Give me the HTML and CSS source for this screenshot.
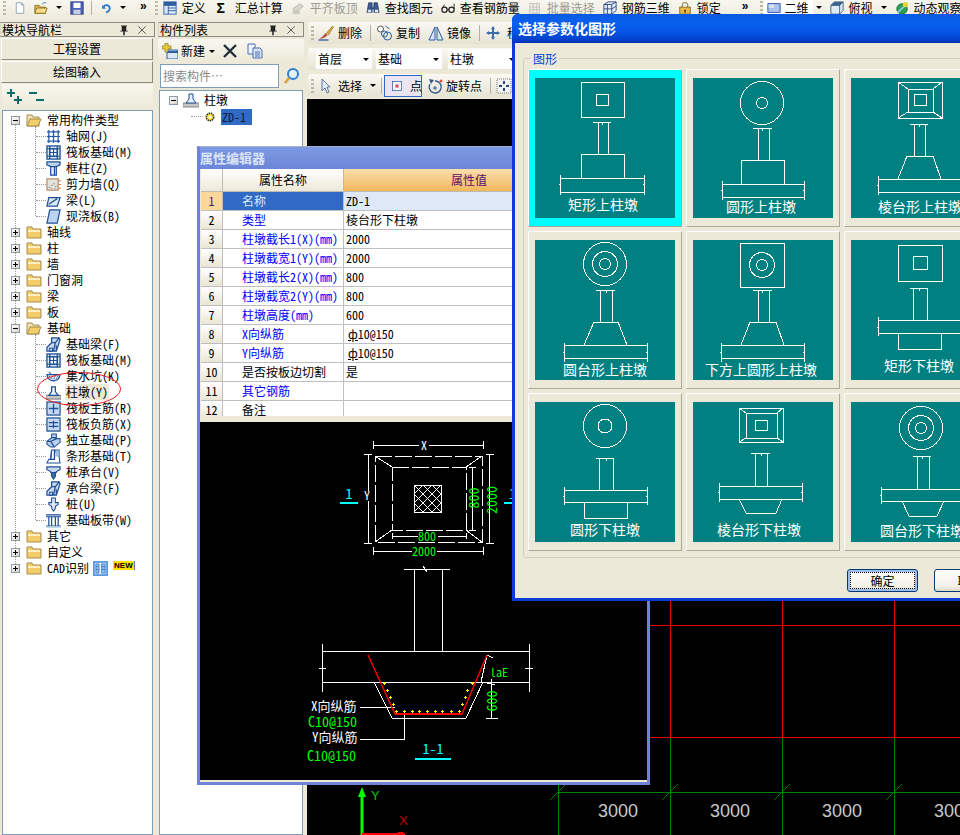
FILE: index.html
```html
<!DOCTYPE html>
<html lang="zh-CN">
<head>
<meta charset="utf-8">
<title>参数化图形</title>
<link rel="stylesheet" href="styles.css">
</head>
<body>
<svg class="sprite" xmlns="http://www.w3.org/2000/svg">
  <symbol id="doc" viewBox="0 0 16 16"><path d="M3 1H10L13 4V15H3Z" fill="#fff" stroke="#7b8da8"/><path d="M10 1V4H13" fill="#dfe6f0" stroke="#7b8da8"/></symbol>
  <symbol id="open" viewBox="0 0 16 16"><path d="M1 5H6L7 7H13V14H1Z" fill="#e7b84c" stroke="#8a6a20"/><path d="M3 8H15L13 14H1Z" fill="#f7dc8c" stroke="#8a6a20"/><path d="M9 4Q11 1 14 2" fill="none" stroke="#3b6bb0"/></symbol>
  <symbol id="save" viewBox="0 0 16 16"><rect x="1" y="1" width="14" height="14" fill="#4a62b8" stroke="#28357c"/><rect x="4" y="2" width="8" height="6" fill="#fff"/><rect x="4" y="10" width="8" height="5" fill="#c7cede"/></symbol>
  <symbol id="undo" viewBox="0 0 16 16"><path d="M3 4V9H8" fill="#2f75c8"/><path d="M4 8C6 3 12 3 13 8C13 11 11 13 8 14" fill="none" stroke="#2f75c8" stroke-width="2.4"/></symbol>
  <symbol id="def" viewBox="0 0 16 16"><rect x="1" y="1" width="14" height="14" fill="#dce8f6" stroke="#2d5f9e"/><path d="M1 5H15M6 5V15M6 8H15M6 11H15" stroke="#2d5f9e" fill="none"/><rect x="1" y="1" width="14" height="4" fill="#2d5f9e"/></symbol>
  <symbol id="grayi" viewBox="0 0 16 16"><path d="M2 9L10 3L14 6L6 13Z" fill="#d8d6cc" stroke="#b5b3a9"/><rect x="2" y="11" width="8" height="4" fill="#c8c6bc"/></symbol>
  <symbol id="binoc" viewBox="0 0 16 16"><path d="M3 2H7V7H9V2H13L15 13H9V9H7V13H1Z" fill="#3a5a92" stroke="#1b2d55" stroke-width=".7"/><rect x="2" y="10" width="4" height="3" fill="#dbe4f5"/><rect x="10" y="10" width="4" height="3" fill="#dbe4f5"/></symbol>
  <symbol id="glass" viewBox="0 0 16 16"><circle cx="4" cy="10" r="3" fill="none" stroke="#222" stroke-width="1.4"/><circle cx="12" cy="10" r="3" fill="none" stroke="#222" stroke-width="1.4"/><path d="M7 10H9M1 9L4 4M15 9V3" stroke="#222" fill="none"/></symbol>
  <symbol id="batch" viewBox="0 0 16 16"><rect x="2" y="3" width="11" height="11" fill="#eee" stroke="#c3c1b8"/><path d="M2 7H13M2 10H13M6 3V14M10 3V14" stroke="#c3c1b8"/></symbol>
  <symbol id="g3d" viewBox="0 0 16 16"><path d="M1 4L6 1H15V11L10 15H1Z" fill="#e8eef8" stroke="#23407c"/><path d="M1 4H10V15M10 4L15 1M1 9H10M5 4V15M10 9L15 6" fill="none" stroke="#23407c"/></symbol>
  <symbol id="lock" viewBox="0 0 16 16"><path d="M5 7V4C5 1 11 1 11 4V7" fill="none" stroke="#9a8f70" stroke-width="1.5"/><rect x="2" y="7" width="12" height="8" fill="#e8b84a" stroke="#8d6a1c"/><path d="M7 10H9V13H7Z" fill="#5b4310"/></symbol>
  <symbol id="rect2d" viewBox="0 0 16 16"><rect x="1" y="3" width="14" height="10" fill="#a9c2ee" stroke="#2d4ea8"/><rect x="2" y="4" width="6" height="4" fill="#d5e1f7"/></symbol>
  <symbol id="cube" viewBox="0 0 16 16"><path d="M1 5L5 1H15V11L11 15H1Z" fill="#dfeaf5" stroke="#38587e"/><path d="M1 5H11V15M11 5L15 1" fill="none" stroke="#38587e"/><path d="M1 5L5 1H15L11 5Z" fill="#36648c"/></symbol>
  <symbol id="globe" viewBox="0 0 16 16"><circle cx="8" cy="9" r="6" fill="#2f9d54" stroke="#1c6b37"/><path d="M3 13L14 3" stroke="#8cc8e8" stroke-width="2"/><circle cx="12" cy="4" r="3" fill="#e8d43a"/></symbol>
  <symbol id="brush" viewBox="0 0 16 16"><path d="M1 14Q5 11 7 8L9 10Q7 13 1 14Z" fill="#ba4f45"/><path d="M8 8L14 1L15 2L10 10Z" fill="#d7a73f" stroke="#7c6020" stroke-width=".5"/><path d="M0 15H10" stroke="#3b63a8" stroke-width="1.4"/></symbol>
  <symbol id="copyr" viewBox="0 0 16 16"><circle cx="4" cy="4" r="3" fill="#fff" stroke="#555"/><circle cx="11" cy="11" r="4" fill="none" stroke="#2d5f9e"/><circle cx="8" cy="9" r="3" fill="none" stroke="#2d5f9e"/><path d="M9 1L13 4" stroke="#2d5f9e"/></symbol>
  <symbol id="mirror" viewBox="0 0 16 16"><path d="M1 15L7 2V15ZM15 15L9 2V15Z" fill="#d9e6f6" stroke="#2d5f9e"/></symbol>
  <symbol id="move" viewBox="0 0 16 16"><path d="M8 1L10 4H9V7H12V6L15 8L12 10V9H9V12H10L8 15L6 12H7V9H4V10L1 8L4 6V7H7V4H6Z" fill="#3a6ea8"/></symbol>
  <symbol id="cursor" viewBox="0 0 16 16"><path d="M5 1V13L8 10L10 15L12 14L10 9H13Z" fill="#dfe8f6" stroke="#41618f" stroke-width=".8"/></symbol>
  <symbol id="dot" viewBox="0 0 16 16"><rect x="2" y="2" width="12" height="12" fill="#fff" stroke="#2d5f9e"/><path d="M3 3L13 13M13 3L3 13" stroke="#c8c8d8"/><rect x="6" y="6" width="4" height="4" fill="#e33b5a"/></symbol>
  <symbol id="rot" viewBox="0 0 16 16"><path d="M3 6A6 6 0 1 0 8 3" fill="none" stroke="#33598f" stroke-width="1.3"/><path d="M2 1L7 2L4 6Z" fill="#33598f"/><path d="M6 10H10M8 8V12" stroke="#33598f"/><circle cx="14" cy="3" r="1.5" fill="#d54"/></symbol>
  <symbol id="fit" viewBox="0 0 16 16"><rect x="1" y="1" width="14" height="14" fill="#f4f4f0" stroke="#777" stroke-dasharray="1 1"/><path d="M8 3V6M8 10V13M3 8H6M10 8H13" stroke="#234a86" stroke-width="2"/></symbol>
  <symbol id="addn" viewBox="0 0 16 16"><rect x="5" y="7" width="11" height="9" fill="#dce8f6" stroke="#2d5f9e"/><path d="M5 9H16" stroke="#2d5f9e" stroke-width="2"/><path d="M3 0H6V3H9V6H6V9H3V6H0V3H3Z" fill="#e8c93a" stroke="#7c6a16" stroke-width=".6"/></symbol>
  <symbol id="cross" viewBox="0 0 16 16"><path d="M2 2L14 14M14 2L2 14" stroke="#222d3d" stroke-width="2.4"/></symbol>
  <symbol id="copy" viewBox="0 0 16 16"><path d="M1 1H8V11H1Z" fill="#eef3fb" stroke="#4b6fb0"/><path d="M6 5H13L15 7V15H6Z" fill="#d9e5f7" stroke="#4b6fb0"/><path d="M8 9H13M8 11H13M8 13H13" stroke="#4b6fb0"/></symbol>
  <symbol id="find" viewBox="0 0 16 16"><circle cx="9" cy="6" r="5" fill="#e5f1fb" stroke="#2e7fd0" stroke-width="2"/><path d="M5 10L1 15" stroke="#e0a030" stroke-width="2.6"/></symbol>
  <symbol id="closed" viewBox="0 0 16 16"><path d="M1 3H6L7 5H15V14H1Z" fill="#f2cd6a" stroke="#a98d4a"/><path d="M2 6H14V8H2Z" fill="#fff2c2"/></symbol>
  <symbol id="opened" viewBox="0 0 16 16"><path d="M1 3H6L7 5H13V14H1Z" fill="#efe2bb" stroke="#a98d4a"/><path d="M4 7H15L12 14H1Z" fill="#f2cd6a" stroke="#a98d4a"/></symbol>
  <symbol id="igrid" viewBox="0 0 16 16"><path d="M1 3H15M1 8H15M1 13H15M3 1V15M8 1V15M13 1V15" stroke="#2a5ba8" fill="none"/><path d="M2 7H4V9H2ZM7 2H9V4H7ZM12 12H14V14H12ZM7 7H9V9H7Z" fill="#2a5ba8"/></symbol>
  <symbol id="iraft" viewBox="0 0 16 16"><rect x="1" y="1" width="14" height="14" fill="#dce8f6" stroke="#1f4f95" stroke-width="1.4"/><rect x="4" y="4" width="8" height="8" fill="#fff" stroke="#1f4f95"/><path d="M1 4H15M1 12H15M4 1V15M12 1V15M8 4V12M4 8H12" stroke="#1f4f95" fill="none"/></symbol>
  <symbol id="icol" viewBox="0 0 16 16"><path d="M1 1H15V4L11 6H5L1 4Z" fill="#bcd3ef" stroke="#1f4f95"/><path d="M5 6H11V15H5Z" fill="#e7f0fb" stroke="#1f4f95"/><path d="M9 6V15" stroke="#1f4f95"/></symbol>
  <symbol id="iwall" viewBox="0 0 16 16"><rect x="1" y="2" width="12" height="12" fill="#e4e2dc" stroke="#b58d68"/><path d="M3 11h1M6 9h1M9 12h1M5 12h1M8 7h1M10 10h1" stroke="#777"/><path d="M13 4h3M13 8h3M13 12h3" stroke="#e0803c"/></symbol>
  <symbol id="ibeam" viewBox="0 0 16 16"><path d="M3 5H15L12 14H1Z" fill="#dce8f6" stroke="#1f4f95"/><path d="M3 12L12 6" stroke="#1f4f95"/></symbol>
  <symbol id="islab" viewBox="0 0 16 16"><path d="M4 1H15L12 15H1Z" fill="#bcd3ef" stroke="#1f4f95" stroke-width="1.3"/></symbol>
  <symbol id="ifb" viewBox="0 0 16 16"><path d="M6 1H14L15 3L11 15H1V11L6 6Z" fill="#c5d8f0" stroke="#1f4f95"/><path d="M6 6L10 6L8 15M10 6L14 1M11 15V9" fill="none" stroke="#1f4f95"/><path d="M4 12H7V15H4Z" fill="#fff" stroke="#1f4f95"/></symbol>
  <symbol id="isump" viewBox="0 0 16 16"><path d="M1 6C2 15 14 15 15 6Z" fill="#dce8f6" stroke="#1f4f95"/><path d="M3 8h1M6 8h1M9 8h1M12 8h1M5 10h1M8 10h1M11 10h1M7 12h1M9 12h1" stroke="#1f4f95"/><path d="M3 3L6 6" stroke="#3f6fb0"/></symbol>
  <symbol id="ipier" viewBox="0 0 16 16"><rect x="0" y="11" width="16" height="4" fill="#c6c6c6" stroke="#888"/><path d="M6 2H10V7L13 11H3L6 7Z" fill="#e7f0fb" stroke="#1f4f95"/></symbol>
  <symbol id="ipos" viewBox="0 0 16 16"><rect x="1" y="1" width="14" height="14" fill="#c5d8f0" stroke="#1f4f95"/><path d="M8 3V13M3 8H13" stroke="#1f4f95" stroke-width="1.4"/></symbol>
  <symbol id="ineg" viewBox="0 0 16 16"><rect x="1" y="1" width="14" height="14" fill="#c5d8f0" stroke="#1f4f95"/><path d="M3 6H13M3 10H13M8 4V12" stroke="#1f4f95" stroke-width="1.2"/></symbol>
  <symbol id="iiso" viewBox="0 0 16 16"><path d="M1 9L6 5V1H11V6H15V10L9 15H5L1 12Z" fill="#b9cfea" stroke="#1f4f95" stroke-width="1.1"/><path d="M6 5H11M1 9H5L9 15M5 9L11 6" fill="none" stroke="#1f4f95"/></symbol>
  <symbol id="ist" viewBox="0 0 16 16"><path d="M6 1H14V8L15 15H1L3 11H5Z" fill="#fff" stroke="#1f4f95" stroke-width="1.1"/><path d="M6 1L5 11M9 1L14 8M9 1V11H4" fill="none" stroke="#1f4f95"/><rect x="10" y="2" width="4" height="6" fill="#9ebce4"/></symbol>
  <symbol id="icap" viewBox="0 0 16 16"><path d="M1 2H15V5L11 7V8H5V7L1 5Z" fill="#c5d8f0" stroke="#1f4f95"/><path d="M6 8H10V12L8 15L6 12Z" fill="#3f6fb0" stroke="#1f4f95"/></symbol>
  <symbol id="ipile" viewBox="0 0 16 16"><path d="M6 1H10V6H13V8L10 10V12L8 15L6 12V10L3 8V6H6Z" fill="#dce8f6" stroke="#1f4f95" stroke-width="1.1"/></symbol>
  <symbol id="iband" viewBox="0 0 16 16"><path d="M0 2H16M0 4H16M0 14H16" stroke="#1f4f95"/><path d="M3 4V14M6 4V14M10 4V14M13 4V14" stroke="#1f4f95"/><rect x="0" y="14" width="16" height="2" fill="#bcd3ef"/></symbol>
  <symbol id="icad" viewBox="0 0 16 16"><rect x="1" y="1" width="14" height="14" fill="#fff" stroke="#2a7ad8" stroke-width="1.5"/><path d="M3 3H6.500V13H3ZM9 3H13V13H9Z" fill="#8ec0f2" stroke="#2060b0" stroke-width=".7"/><path d="M3 6H6M3 9H6M9 6H13M9 9H13" stroke="#2060b0" stroke-width=".7"/></symbol>
  <symbol id="iplus" viewBox="0 0 16 16"><path d="M3 0H5V3H8V5H5V8H3V5H0V3H3ZM10 7H12V10H15V12H12V15H10V12H7V10H10Z" fill="#0a6b6b"/></symbol>
  <symbol id="iminus" viewBox="0 0 16 16"><path d="M0 3H8V5H0ZM7 10H15V12H7Z" fill="#0a6b6b"/></symbol>
  <symbol id="ipin" viewBox="0 0 16 16"><path d="M4 2H12V3H11V9H13V10H9V15H7V10H3V9H5V3H4Z" fill="#222"/></symbol>
  <symbol id="ix" viewBox="0 0 16 16"><path d="M3 3L13 13M13 3L3 13" stroke="#333"/></symbol>
  <symbol id="icomp" viewBox="0 0 16 16"><circle cx="8" cy="8" r="5" fill="#f2dc3c" stroke="#333" stroke-dasharray="2 1" stroke-width="2"/><circle cx="8" cy="8" r="2" fill="#fff"/></symbol>
</svg>

<div class="app">
  <header class="topbar">
    <span class="grip"></span>
    <svg class="ic w12"><use href="#doc"/></svg>
    <svg class="ic"><use href="#open"/></svg>
    <span class="caret"></span>
    <svg class="ic"><use href="#save"/></svg>
    <span class="sep"></span>
    <svg class="ic w12"><use href="#undo"/></svg>
    <span class="caret"></span>
    <span class="more">»</span>
    <span class="grip"></span>
    <span class="ti"><svg class="ic"><use href="#def"/></svg>定义</span>
    <span class="ti"><b class="sigma">Σ</b>汇总计算</span>
    <span class="ti off"><svg class="ic"><use href="#grayi"/></svg>平齐板顶</span>
    <span class="ti"><svg class="ic"><use href="#binoc"/></svg>查找图元</span>
    <span class="ti"><svg class="ic"><use href="#glass"/></svg>查看钢筋量</span>
    <span class="ti off"><svg class="ic"><use href="#batch"/></svg>批量选择</span>
    <span class="ti"><svg class="ic"><use href="#g3d"/></svg>钢筋三维</span>
    <span class="ti"><svg class="ic"><use href="#lock"/></svg>锁定</span>
    <span class="more far">»</span>
    <span class="grip"></span>
    <span class="combo2d"><svg class="ic"><use href="#rect2d"/></svg>二维</span>
    <span class="caret"></span>
    <span class="ti"><svg class="ic"><use href="#cube"/></svg>俯视</span>
    <span class="caret"></span>
    <span class="ti"><svg class="ic"><use href="#globe"/></svg>动态观察</span>
  </header>

  <div class="main">
    <aside class="nav">
      <div class="ptitle"><span>模块导航栏</span><svg class="pi"><use href="#ipin"/></svg><svg class="pi"><use href="#ix"/></svg></div>
      <div class="navbtn">工程设置</div>
      <div class="navbtn">绘图输入</div>
      <div class="navtools"><svg class="ic"><use href="#iplus"/></svg><svg class="ic"><use href="#iminus"/></svg></div>
      <div class="tree">
        <div class="root">
          <div class="r0"><span class="ex"></span><svg class="ic"><use href="#opened"/></svg><span>常用构件类型</span></div>
          <div class="kids">
            <div class="r1"><svg class="ic t"><use href="#igrid"/></svg><span>轴网(J)</span></div>
            <div class="r1"><svg class="ic t"><use href="#iraft"/></svg><span>筏板基础(M)</span></div>
            <div class="r1"><svg class="ic t"><use href="#icol"/></svg><span>框柱(Z)</span></div>
            <div class="r1"><svg class="ic t"><use href="#iwall"/></svg><span>剪力墙(Q)</span></div>
            <div class="r1"><svg class="ic t"><use href="#ibeam"/></svg><span>梁(L)</span></div>
            <div class="r1"><svg class="ic t"><use href="#islab"/></svg><span>现浇板(B)</span></div>
          </div>
          <div class="r0"><span class="ex plus"></span><svg class="ic"><use href="#closed"/></svg><span>轴线</span></div>
          <div class="r0"><span class="ex plus"></span><svg class="ic"><use href="#closed"/></svg><span>柱</span></div>
          <div class="r0"><span class="ex plus"></span><svg class="ic"><use href="#closed"/></svg><span>墙</span></div>
          <div class="r0"><span class="ex plus"></span><svg class="ic"><use href="#closed"/></svg><span>门窗洞</span></div>
          <div class="r0"><span class="ex plus"></span><svg class="ic"><use href="#closed"/></svg><span>梁</span></div>
          <div class="r0"><span class="ex plus"></span><svg class="ic"><use href="#closed"/></svg><span>板</span></div>
          <div class="r0"><span class="ex"></span><svg class="ic"><use href="#opened"/></svg><span>基础</span></div>
          <div class="kids">
            <div class="r1"><svg class="ic t"><use href="#ifb"/></svg><span>基础梁(F)</span></div>
            <div class="r1"><svg class="ic t"><use href="#iraft"/></svg><span>筏板基础(M)</span></div>
            <div class="r1"><svg class="ic t"><use href="#isump"/></svg><span>集水坑(K)</span></div>
            <div class="r1"><svg class="ic t"><use href="#ipier"/></svg><span class="hit">柱墩(Y)</span></div>
            <div class="r1"><svg class="ic t"><use href="#ipos"/></svg><span>筏板主筋(R)</span></div>
            <div class="r1"><svg class="ic t"><use href="#ineg"/></svg><span>筏板负筋(X)</span></div>
            <div class="r1"><svg class="ic t"><use href="#iiso"/></svg><span>独立基础(P)</span></div>
            <div class="r1"><svg class="ic t"><use href="#ist"/></svg><span>条形基础(T)</span></div>
            <div class="r1"><svg class="ic t"><use href="#icap"/></svg><span>桩承台(V)</span></div>
            <div class="r1"><svg class="ic t"><use href="#ifb"/></svg><span>承台梁(F)</span></div>
            <div class="r1"><svg class="ic t"><use href="#ipile"/></svg><span>桩(U)</span></div>
            <div class="r1"><svg class="ic t"><use href="#iband"/></svg><span>基础板带(W)</span></div>
          </div>
          <div class="r0"><span class="ex plus"></span><svg class="ic"><use href="#closed"/></svg><span>其它</span></div>
          <div class="r0"><span class="ex plus"></span><svg class="ic"><use href="#closed"/></svg><span>自定义</span></div>
          <div class="r0"><span class="ex plus"></span><svg class="ic"><use href="#closed"/></svg><span>CAD识别</span><svg class="ic cadicon"><use href="#icad"/></svg><span class="new">NEW</span></div>
        </div>
        <svg class="ring" viewBox="0 0 86 36"><ellipse cx="43" cy="18" rx="41.500" ry="16.500"/></svg>
      </div>
    </aside>

    <aside class="list">
      <div class="ptitle"><span>构件列表</span><svg class="pi"><use href="#ipin"/></svg><svg class="pi"><use href="#ix"/></svg></div>
      <div class="listbar">
        <svg class="ic"><use href="#addn"/></svg><span>新建</span><span class="caret"></span>
        <svg class="ic x"><use href="#cross"/></svg><svg class="ic"><use href="#copy"/></svg>
      </div>
      <div class="search"><span class="sbox">搜索构件…</span><span class="sbtn"><svg class="ic"><use href="#find"/></svg></span></div>
      <div class="ltree">
        <div class="lr0"><span class="ex"></span><svg class="ic"><use href="#ipier"/></svg><span>柱墩</span></div>
        <div class="lr1"><svg class="ic w12"><use href="#icomp"/></svg><span class="picked">ZD-1</span></div>
      </div>
    </aside>

    <section class="work">
      <div class="strip">
        <span class="grip"></span>
        <span class="ti"><svg class="ic w17"><use href="#brush"/></svg>删除</span>
        <span class="sep"></span>
        <span class="ti"><svg class="ic w17"><use href="#copyr"/></svg>复制</span>
        <span class="ti"><svg class="ic"><use href="#mirror"/></svg>镜像</span>
        <span class="sep"></span>
        <span class="ti gap6"><svg class="ic"><use href="#move"/></svg>移</span>
      </div>
      <div class="strip combos">
        <span class="combo c1"><i>首层</i><span class="caret"></span></span>
        <span class="combo c2"><i>基础</i><span class="caret"></span></span>
        <span class="combo c3"><i>柱墩</i><span class="caret"></span></span>
      </div>
      <div class="strip tall">
        <span class="grip"></span>
        <span class="ti sel"><svg class="ic"><use href="#cursor"/></svg>选择</span>
        <span class="caret"></span>
        <span class="sep"></span>
        <span class="ptbtn"><svg class="ic w12"><use href="#dot"/></svg>点</span>
        <span class="ti"><svg class="ic"><use href="#rot"/></svg>旋转点</span>
        <span class="sep"></span>
        <svg class="ic"><use href="#fit"/></svg>
      </div>
      <svg class="cad" viewBox="307 99 653 736">
        <g class="red">
          <path d="M670.500 99V737M782.500 99V737M894.500 99V737M558 625.500H960M558 737.500H960"/>
        </g>
        <g class="grn">
          <path d="M558.500 785V835M670.500 738V835M782.500 738V835M894.500 738V835M558 792.500H960"/>
          <path d="M550 800L566 784M662 800L678 784M774 800L790 784M886 800L902 784"/>
        </g>
        <text class="dimt" x="618" y="817">3000</text>
        <text class="dimt" x="730" y="817">3000</text>
        <text class="dimt" x="842" y="817">3000</text>
        <text class="dimt" x="954" y="817">3000</text>
        <path class="axy" d="M362 787L366 797H363.500V835H360.500V797H358Z"/>
        <text class="axl g" x="371" y="800">Y</text>
        <text class="axl r" x="399" y="825">X</text>
        <path class="axx" d="M362 834H405"/>
        <path class="axx2" d="M398 832H403V835H398Z"/>
      </svg>
    </section>
  </div>

  <section class="win prop">
    <div class="ptl">属性编辑器</div>
    <div class="twrap">
      <table class="grid">
        <colgroup><col class="c-n"><col class="c-k"><col class="c-v"></colgroup>
        <thead><tr><th class="num"></th><th>属性名称</th><th class="valh">属性值</th></tr></thead>
        <tbody>
          <tr class="cur"><td class="num">1</td><td class="k">名称</td><td class="v">ZD-1</td></tr>
          <tr><td class="num">2</td><td class="k blue">类型</td><td class="v">棱台形下柱墩</td></tr>
          <tr><td class="num">3</td><td class="k blue">柱墩截长1(X)(mm)</td><td class="v">2000</td></tr>
          <tr><td class="num">4</td><td class="k blue">柱墩截宽1(Y)(mm)</td><td class="v">2000</td></tr>
          <tr><td class="num">5</td><td class="k blue">柱墩截长2(X)(mm)</td><td class="v">800</td></tr>
          <tr><td class="num">6</td><td class="k blue">柱墩截宽2(Y)(mm)</td><td class="v">800</td></tr>
          <tr><td class="num">7</td><td class="k blue">柱墩高度(mm)</td><td class="v">600</td></tr>
          <tr><td class="num">8</td><td class="k blue">X向纵筋</td><td class="v steel"><u>ф</u>10@150</td></tr>
          <tr><td class="num">9</td><td class="k blue">Y向纵筋</td><td class="v steel"><u>ф</u>10@150</td></tr>
          <tr><td class="num">10</td><td class="k">是否按板边切割</td><td class="v">是</td></tr>
          <tr><td class="num">11</td><td class="k blue">其它钢筋</td><td class="v"></td></tr>
          <tr><td class="num">12</td><td class="k">备注</td><td class="v"></td></tr>
        </tbody>
      </table>
    </div>
    <div class="pstrip"></div>
    <svg class="draw" viewBox="200 422 447 358">
      <defs><pattern id="hatch" width="9" height="9" patternUnits="userSpaceOnUse" x="414" y="485"><path d="M0 0L9 9M9 0L0 9" stroke="#fff" fill="none"/></pattern></defs>
      <g class="wl">
        <path class="dash" d="M375 456H482V542H375Z"/>
        <path class="dash" d="M392 467H466V530H392Z"/>
        <path d="M375 456L392 467M482 456L466 467M375 542L392 530M482 542L466 530"/>
        <rect x="414.500" y="485.500" width="27" height="27"/>
        <path d="M373 445H419M429 445H483M373 441V449M483 441V449"/>
        <path d="M368 454V491M368 501V543M364 454H372M364 543H372"/>
        <path d="M489 454V543M486 454H494M486 543H494"/>
        <path d="M472 467V530M469 467H476M469 530H476"/>
        <path d="M392 536H418M438 536H466M392 533V539M466 533V539"/>
        <path d="M373 551H412M437 551H483M373 547V555M483 547V555"/>
        <path d="M414 569V651M442 569V651M404 569H450M423 566L427 572"/>
        <path d="M322 651H529M322 682H529M322 644V692M529 644V692M319 668H326M525 668H533"/>
        <path d="M374 682L392 718H466L483 682"/>
        <path d="M360 707H395M360 739H404V712"/>
        <path d="M487 655L493 658M487 655L481 682M483 682L495 685M491 679V718M486 718H498"/>
      </g>
      <g class="rebar"><path d="M368 655L395 714H462L487 655"/><path class="thick" d="M395 714H462"/></g>
      <g class="yl">
        <path d="M383 683h3m-1.500-1.500v3M386 690h3m-1.500-1.500v3M389 697h3m-1.500-1.500v3M392 704h3m-1.500-1.500v3M395 711h3m-1.500-1.500v3M403 711h3m-1.500-1.500v3M411 711h3m-1.500-1.500v3M418 711h3m-1.500-1.500v3M426 711h3m-1.500-1.500v3M434 711h3m-1.500-1.500v3M441 711h3m-1.500-1.500v3M450 711h3m-1.500-1.500v3M458 711h3m-1.500-1.500v3M471 683h3m-1.500-1.500v3M466 690h3m-1.500-1.500v3M464 697h3m-1.500-1.500v3M461 704h3m-1.500-1.500v3"/>
      </g>
      <text class="tw mid" x="424" y="450">X</text>
      <text class="tw mid" x="367" y="500">Y</text>
      <text class="tg mid" x="427" y="541">800</text>
      <text class="tg mid" x="424" y="556">2000</text>
      <text class="tg big mid" transform="rotate(-90 479 498)" x="479" y="498">800</text>
      <text class="tg big mid" transform="rotate(-90 497 500)" x="497" y="500">2000</text>
      <text class="tc big mid" x="349" y="499">1</text>
      <text class="tc big" x="509" y="499">1</text>
      <path class="cy" d="M340 503H358M504 503H514M415 759H451"/>
      <text class="tg big mid" transform="rotate(-90 497 701)" x="497" y="701">600</text>
      <text class="tg" x="490" y="677">laE</text>
      <text class="tw t13" x="311" y="711">X向纵筋</text>
      <text class="tg big" x="308" y="727">C10@150</text>
      <text class="tw t13" x="312" y="742">Y向纵筋</text>
      <text class="tg big" x="307" y="761">C10@150</text>
      <text class="tc big mid" x="433" y="754">1-1</text>
    </svg>
  </section>

  <section class="win dlg">
    <div class="dtl">选择参数化图形</div>
    <div class="gbox">
      <span class="legend">图形</span>
      <div class="cards">
        <div class="card on"><svg class="pic" viewBox="0 0 140 140"><g class="ln">
          <rect x="46" y="4" width="43" height="35"/><rect x="61" y="16" width="12" height="11"/>
          <path d="M58 44H76M67 44v3M63 44V76M73 44V76M46 76H89V100H46ZM25 100H109M25 114H109M25 97V117M109 97V117M24 106h2M108 106h2"/></g>
          <text class="cap" x="68" y="132">矩形上柱墩</text></svg></div>
        <div class="card"><svg class="pic" viewBox="0 0 140 140"><g class="ln">
          <circle cx="69" cy="25" r="21.500"/><circle cx="69" cy="25" r="5.500"/>
          <path d="M60 50H79M69 50v3M65 50V82M76 50V82M48 82H91V106H48ZM29 106H111M29 119H111M29 103V122M111 103V122M28 112h2M110 112h2"/></g>
          <text class="cap" x="68" y="134">圆形上柱墩</text></svg></div>
        <div class="card"><svg class="pic" viewBox="0 0 140 140"><g class="ln">
          <rect x="47" y="4" width="44" height="36"/><rect x="57" y="11" width="25" height="23"/><rect x="63" y="16" width="12" height="11"/>
          <path d="M47 4L57 11M91 4L82 11M47 40L57 34M91 40L82 34"/>
          <path d="M59 46H77M68 46v3M63 46V78M74 46V78M56 78H82L90 101M56 78L47 101M27 101H110M27 114H110M27 98V117M110 98V117M26 107h2M109 107h2"/></g>
          <text class="cap" x="69" y="134">棱台形上柱墩</text></svg></div>

        <div class="card"><svg class="pic" viewBox="0 0 140 140"><g class="ln">
          <circle cx="70" cy="24" r="21.500"/><circle cx="70" cy="24" r="12.500"/><circle cx="70" cy="24" r="5.500"/>
          <path d="M61 50H80M71 50v3M65 50V82M77 50V82M59 82H83L92 105M59 82L49 105M29 105H112M29 118H112M29 103V122M112 103V122M28 112h2M111 112h2"/></g>
          <text class="cap" x="70" y="135">圆台形上柱墩</text></svg></div>
        <div class="card"><svg class="pic" viewBox="0 0 140 140"><g class="ln">
          <rect x="47" y="3" width="44" height="44"/><circle cx="69" cy="25" r="12.500"/><circle cx="69" cy="25" r="5.500"/>
          <path d="M60 50H79M69 50v3M65 50V82M76 50V82M57 82H83L91 105M57 82L48 105M28 105H111M28 118H111M28 103V122M111 103V122M27 112h2M110 112h2"/></g>
          <text class="cap" x="68" y="135">下方上圆形上柱墩</text></svg></div>
        <div class="card"><svg class="pic" viewBox="0 0 140 140"><g class="ln">
          <rect x="47" y="5" width="44" height="36"/><rect x="62" y="16" width="14" height="13"/>
          <path d="M59 48H77M68 48v3M62 48V80M76 48V80M27 80H111M27 93H111M27 77V96M111 77V96M26 87h2M110 87h2M47 93V109H90V93"/></g>
          <text class="cap" x="68" y="131">矩形下柱墩</text></svg></div>

        <div class="card"><svg class="pic" viewBox="0 0 140 140"><g class="ln">
          <circle cx="70" cy="24" r="21.500"/><circle cx="70" cy="24" r="7"/>
          <path d="M61 56H79M71 56v3M64 56V88M78 56V88M29 88H112M29 100H112M29 85V103M112 85V103M28 94h2M111 94h2M49 100V116H92V100"/></g>
          <text class="cap" x="70" y="133">圆形下柱墩</text></svg></div>
        <div class="card"><svg class="pic" viewBox="0 0 140 140"><g class="ln">
          <rect x="46" y="6" width="44" height="34"/><rect x="53" y="11" width="31" height="25"/><rect x="62" y="18" width="12" height="10"/>
          <path d="M46 6L53 11M90 6L84 11M46 40L53 36M90 40L84 36"/>
          <path d="M58 51H77M68 51v3M62 51V84M74 51V84M26 84H109M26 97H109M26 81V100M109 81V100M25 90h2M108 90h2M46 97L53 111H83L89 97"/></g>
          <text class="cap" x="66" y="133">棱台形下柱墩</text></svg></div>
        <div class="card"><svg class="pic" viewBox="0 0 140 140"><g class="ln">
          <circle cx="70" cy="26" r="21.500"/><circle cx="70" cy="26" r="12.500"/><circle cx="70" cy="26" r="5.500"/>
          <path d="M62 54H80M71 54v3M66 54V87M78 54V87M30 87H113M30 99H113M30 85V102M113 85V102M29 93h2M112 93h2M51 99L58 114H86L93 99"/></g>
          <text class="cap" x="71" y="134">圆台形下柱墩</text></svg></div>
      </div>
    </div>
    <div class="dfoot"><span class="btn def">确定</span><span class="btn">取消</span></div>
  </section>
</div>
</body>
</html>
```

FILE: styles.css
```css
* { box-sizing: border-box; }
html, body { margin: 0; padding: 0; overflow: hidden; background: #ece9d8; }
.sprite { display: none; }
.app {
  position: relative; width: 960px; height: 835px; overflow: hidden; background: #ece9d8;
  font: 12px/16px "Noto Sans Mono CJK SC", "Noto Sans CJK SC", monospace; color: #000;
}
.ic { width: 16px; height: 16px; flex: none; display: block; }
.ic.w12 { width: 12px; }
.ic.w17 { width: 17px; }
.ic.t { width: 15px; height: 15px; stroke-width: 1.3; }

.topbar {
  height: 22px; display: flex; align-items: center; gap: 8px; padding: 0 0 7px 3px; overflow: hidden;
  background: linear-gradient(#f8f7f0, #ece9d8);
}
.topbar .ic { width: 14px; height: 14px; }
.topbar .ic.w12 { width: 12px; }
.topbar .grip + .ti { margin-left: -3px; }
.topbar .sep { margin-left: -1px; height: 14px; }
.grip { width: 3px; height: 14px; flex: none; background: repeating-linear-gradient(#bdb9a6 0 2px, transparent 2px 4px); }
.sep { width: 1px; height: 16px; flex: none; background: #b5b2a2; }
.caret { width: 0; height: 0; flex: none; border: 3px solid transparent; border-top: 3px solid #000; border-bottom: 0; }
.more { font: bold 12px/12px "Liberation Sans", sans-serif; margin: -3px 0 0 6px; }
.more.far { margin-left: 13px; margin-right: 3px; }
.ti { display: flex; align-items: center; gap: 5px; flex: none; white-space: nowrap; }
.off { color: #9c9a90; }
.sigma { width: 14px; text-align: center; margin-right: 2px; font: bold 14px/16px "Liberation Sans", sans-serif; }
.topbar .combo2d { display: flex; align-items: center; gap: 4px; width: 49px; height: 20px; margin-left: -7px; padding-left: 3px; background: #fff; flex: none; }
.combo2d + .caret { margin-left: -5px; }

.main { display: flex; height: 813px; }
.nav { width: 155px; display: flex; flex-direction: column; flex: none; position: relative; }
.ptitle {
  height: 15px; flex: none; display: flex; align-items: center; padding-left: 1px;
  background: #ece9d8; border: 1px solid #8c8c82; border-left-color: #d8d5c6; font-size: 12px; line-height: 13px;
}
.ptitle span { flex: 1; }
.pi { width: 12px; height: 12px; margin-right: 6px; flex: none; }
.navbtn {
  height: 22px; margin: 1px 2px 0 1px; text-align: center; line-height: 20px;
  border: 1px solid; border-color: #fff #8f8d80 #8f8d80 #fff; background: #ece9d8;
}
.navtools { height: 26px; margin: 1px 2px 0 2px; display: flex; align-items: center; gap: 6px; padding-left: 5px; background: linear-gradient(#f8f7f0, #ece9d8); }
.tree { flex: 1; margin: 0 2px; background: #fff; border: 1px solid #7f9db9; padding-top: 1px; position: relative; }
.root { position: relative; }
.root::before { content: ""; position: absolute; left: 12px; top: 8px; bottom: 8px; border-left: 1px dotted #999; }
.r0 { height: 16px; display: flex; align-items: center; padding-left: 8px; position: relative; }
.r0 .ic { margin-left: 6px; }
.r0 > span:not(.ex) { margin-left: 5px; white-space: nowrap; }
.r0 > .cadicon { margin-left: 4px; width: 15px; height: 15px; }
.r0 > .new { margin: -6px 0 0 1px; padding: 0 1px; height: 9px; font: bold 8px/9px "Liberation Sans", sans-serif; background: #ffe100; border-right: 1px solid #6e6ec8; }
.ex {
  width: 9px; height: 9px; flex: none; position: relative; border: 1px solid #8e9aa8;
  background: linear-gradient(135deg, #fff, #d5d2c2);
}
.ex::before { content: ""; position: absolute; left: 1px; top: 3px; width: 5px; height: 1px; background: #000; }
.ex.plus::after { content: ""; position: absolute; left: 3px; top: 1px; width: 1px; height: 5px; background: #000; }
.kids { position: relative; }
.kids::before { content: ""; position: absolute; left: 32px; top: -2px; bottom: 8px; border-left: 1px dotted #999; }
.r1 { height: 16px; display: flex; align-items: center; padding-left: 43px; position: relative; }
.r1::before { content: ""; position: absolute; left: 33px; top: 8px; width: 10px; border-top: 1px dotted #999; }
.r1 span { margin-left: 4px; padding: 0 1px; white-space: nowrap; }
.r1 .hit { background: #ece9d8; }
.ring { position: absolute; left: 33px; top: 260px; width: 86px; height: 36px; overflow: visible; }
.ring ellipse { fill: none; stroke: #e8201c; stroke-width: 1; }

.list { width: 146px; margin-left: 3px; display: flex; flex-direction: column; flex: none; }
.listbar { height: 24px; margin-top: 2px; display: flex; align-items: center; padding-left: 4px; background: linear-gradient(#f8f7f0, #ece9d8); flex: none; }
.listbar span:first-of-type { margin: 0 4px 0 3px; }
.listbar .x { margin-left: 7px; margin-right: 9px; }
.search { height: 26px; display: flex; align-items: center; padding: 1px 0 1px 2px; flex: none; }
.sbox { width: 119px; height: 24px; background: #fff; border: 1px solid #7f9db9; color: #8a8a8a; line-height: 22px; padding-left: 2px; }
.sbtn { width: 25px; height: 24px; display: flex; align-items: center; justify-content: center; }
.ltree { flex: 1; background: #fff; border: 1px solid #7f9db9; margin: 1px 1px 0 1px; padding-top: 1px; }
.lr0 { height: 16px; display: flex; align-items: center; padding-left: 9px; }
.lr0 .ic { margin-left: 5px; }
.lr0 span:last-child { margin-left: 5px; }
.lr1 { height: 17px; display: flex; align-items: center; padding-left: 44px; position: relative; }
.lr1::before { content: ""; position: absolute; left: 31px; top: 8px; width: 12px; height: 1px; border-top: 1px dotted #999; }
.lr1 .picked { margin-left: 5px; width: 31px; height: 16px; padding-left: 1px; background: #316ac5; color: #0b1c36; }

.work { flex: 1; margin-left: 3px; display: flex; flex-direction: column; min-width: 0; }
.strip {
  height: 22px; display: flex; align-items: center; gap: 8px; padding-left: 3px; flex: none; margin: 0 0 4px 1px;
  background: linear-gradient(#faf9f3, #e6e3d2); border-radius: 3px 0 0 3px; white-space: nowrap;
}
.strip .ti { gap: 3px; }
.strip .sep { margin-right: -3px; }
.strip .grip + .ti { margin-left: -4px; }
.strip .ti.gap6 { gap: 6px; }
.strip .grip + .ti.sel { margin-left: -5px; gap: 5px; }
.strip.tall { height: 23px; margin-bottom: 2px; }
.strip.tall .caret + .sep { margin-left: -3px; }
.combos { padding-left: 8px; gap: 4px; }
.combo { height: 20px; display: flex; align-items: center; justify-content: space-between; flex: none; background: #fff; }
.combo i { font-style: normal; padding-left: 2px; }
.combo .caret { margin-right: 3px; }
.c1 { width: 56px; }
.c2 { width: 66px; }
.c3 { width: 70px; margin-left: 2px; }
.ptbtn { width: 38px; height: 22px; margin-left: -3px; display: flex; align-items: center; gap: 7px; padding-left: 6px; border: 1px solid #316ac5; background: #e9e6f2; flex: none; }
.ptbtn + .ti { margin-left: -3px; }
.cad { flex: 1; width: 653px; height: 736px; display: block; background: #000; }
.red path { fill: none; stroke: #f00000; }
.grn path { fill: none; stroke: #008000; }
.dimt { font: 18px "Liberation Sans", sans-serif; fill: #c8c8c8; text-anchor: middle; }
.axy { fill: #00ff00; }
.axl { font: 13px "Liberation Sans", sans-serif; }
.axl.g { fill: #00c800; }
.axl.r { fill: #c00000; }
.axx { fill: none; stroke: #ff0000; stroke-width: 2; }
.axx2 { fill: #ff0000; }

.win { position: absolute; }
.prop { left: 197px; top: 146px; width: 453px; height: 639px; border: 3px solid #6f83d6; border-top: 1px solid #a8aec8; display: flex; flex-direction: column; background: #ece9d8; }
.ptl { height: 22px; flex: none; color: #dbe4f8; font-weight: bold; font-size: 13px; line-height: 21px; background: linear-gradient(#7e99e2, #6c86d8); }
.twrap { height: 247px; flex: none; overflow: hidden; margin-left: 1px; background: #fff; }
.grid { width: 446px; border-collapse: separate; border-spacing: 0; table-layout: fixed; }
.c-n { width: 22px; }
.c-k { width: 121px; }
.grid th { height: 23px; padding: 0; font-weight: normal; font-size: 12px; background: linear-gradient(#fff, #ece9d8); border-right: 1px solid #bdbcb2; border-bottom: 1px solid #bdbcb2; }
.grid th.valh { background: linear-gradient(#fbdfae, #f2b75c); color: #5c0f6a; text-align: left; padding-left: 107px; }
.grid td { height: 19px; padding: 0; line-height: 18px; border-right: 1px solid #bfbfbf; border-bottom: 1px solid #bfbfbf; white-space: nowrap; overflow: hidden; }
.grid td.num { text-align: center; background: linear-gradient(#fff, #e9e6d6); }
.grid td.k { padding-left: 19px; }
.grid td.v { padding-left: 2px; }
.grid td.steel { padding-left: 4px; }
.grid td.blue { color: #0000ff; }
.cur td.num { background: #fcd79a; color: #5c0f6a; }
.cur td.k { background: #316ac5; color: #dfe8fa; }
.cur td.v { background: #dfe8f6; }
.pstrip { height: 6px; flex: none; }
.draw { width: 447px; height: 358px; flex: none; display: block; background: #000; }
.wl path, .wl rect { fill: none; stroke: #fff; shape-rendering: crispEdges; }
.wl rect { fill: url(#hatch); }
.wl .dash { stroke-dasharray: 17 3; }
.rebar path { fill: none; stroke: #ff0000; stroke-width: 1.4; }
.rebar .thick { stroke-width: 2; }
.yl path { fill: none; stroke: #ffff00; shape-rendering: crispEdges; }
.cy { fill: none; stroke: #00ffff; stroke-width: 2; shape-rendering: crispEdges; }
.tw, .tg, .tc { font-size: 12px; }
.tw { fill: #fff; }
.tg { fill: #00ff00; }
.tc { fill: #00ffff; }
.draw .big { font-size: 14px; }
.draw .t13 { font-size: 13px; }
.mid { text-anchor: middle; }

.dlg { left: 512px; top: 14px; width: 500px; height: 587px; background: #ece9d8; border: 3px solid #0a3bd2; border-top: 0; border-radius: 6px 6px 0 0; display: flex; flex-direction: column; }
.dtl {
  height: 29px; margin: 0 -3px; flex: none; padding-left: 6px; color: #fff; font-weight: bold; font-size: 14px; line-height: 29px;
  background: linear-gradient(#0a5ae2, #0a60ee 30%, #0555e6 60%, #0340c8 90%, #0030b0); border-radius: 6px 6px 0 0;
}
.gbox { position: relative; height: 500px; margin: 15px 0 0 8px; padding: 10px 0 0 4px; border: 1px solid #d0cebf; border-radius: 3px; flex: none; }
.legend { position: absolute; left: 7px; top: -8px; padding: 0 2px; color: #0046d5; background: #ece9d8; }
.cards { display: grid; grid-template-columns: repeat(3, 154px); grid-auto-rows: 158px; gap: 4px; }
.card { padding: 8px 6px; border: 1px solid; border-color: #fff #aca899 #aca899 #fff; background: #ece9d8; }
.card.on { background: #00ffff; border-color: #fff #aca899 #aca899 #fff; }
.pic { width: 140px; height: 140px; display: block; background: #008080; }
.ln rect, .ln circle, .ln path { fill: none; stroke: #fff; shape-rendering: crispEdges; }
.cap { font-size: 14px; fill: #fff; text-anchor: middle; }
.dfoot { display: flex; gap: 16px; padding: 11px 0 0 332px; }
.btn { width: 71px; height: 23px; flex: none; text-align: center; line-height: 21px; border: 1px solid #003c74; border-radius: 3px; background: linear-gradient(#fff, #f2f0e6 80%, #dcd8c8); }
.btn.def { box-shadow: inset 0 0 0 2px #9dbcea; outline: 1px dotted #000; outline-offset: -4px; }
```
